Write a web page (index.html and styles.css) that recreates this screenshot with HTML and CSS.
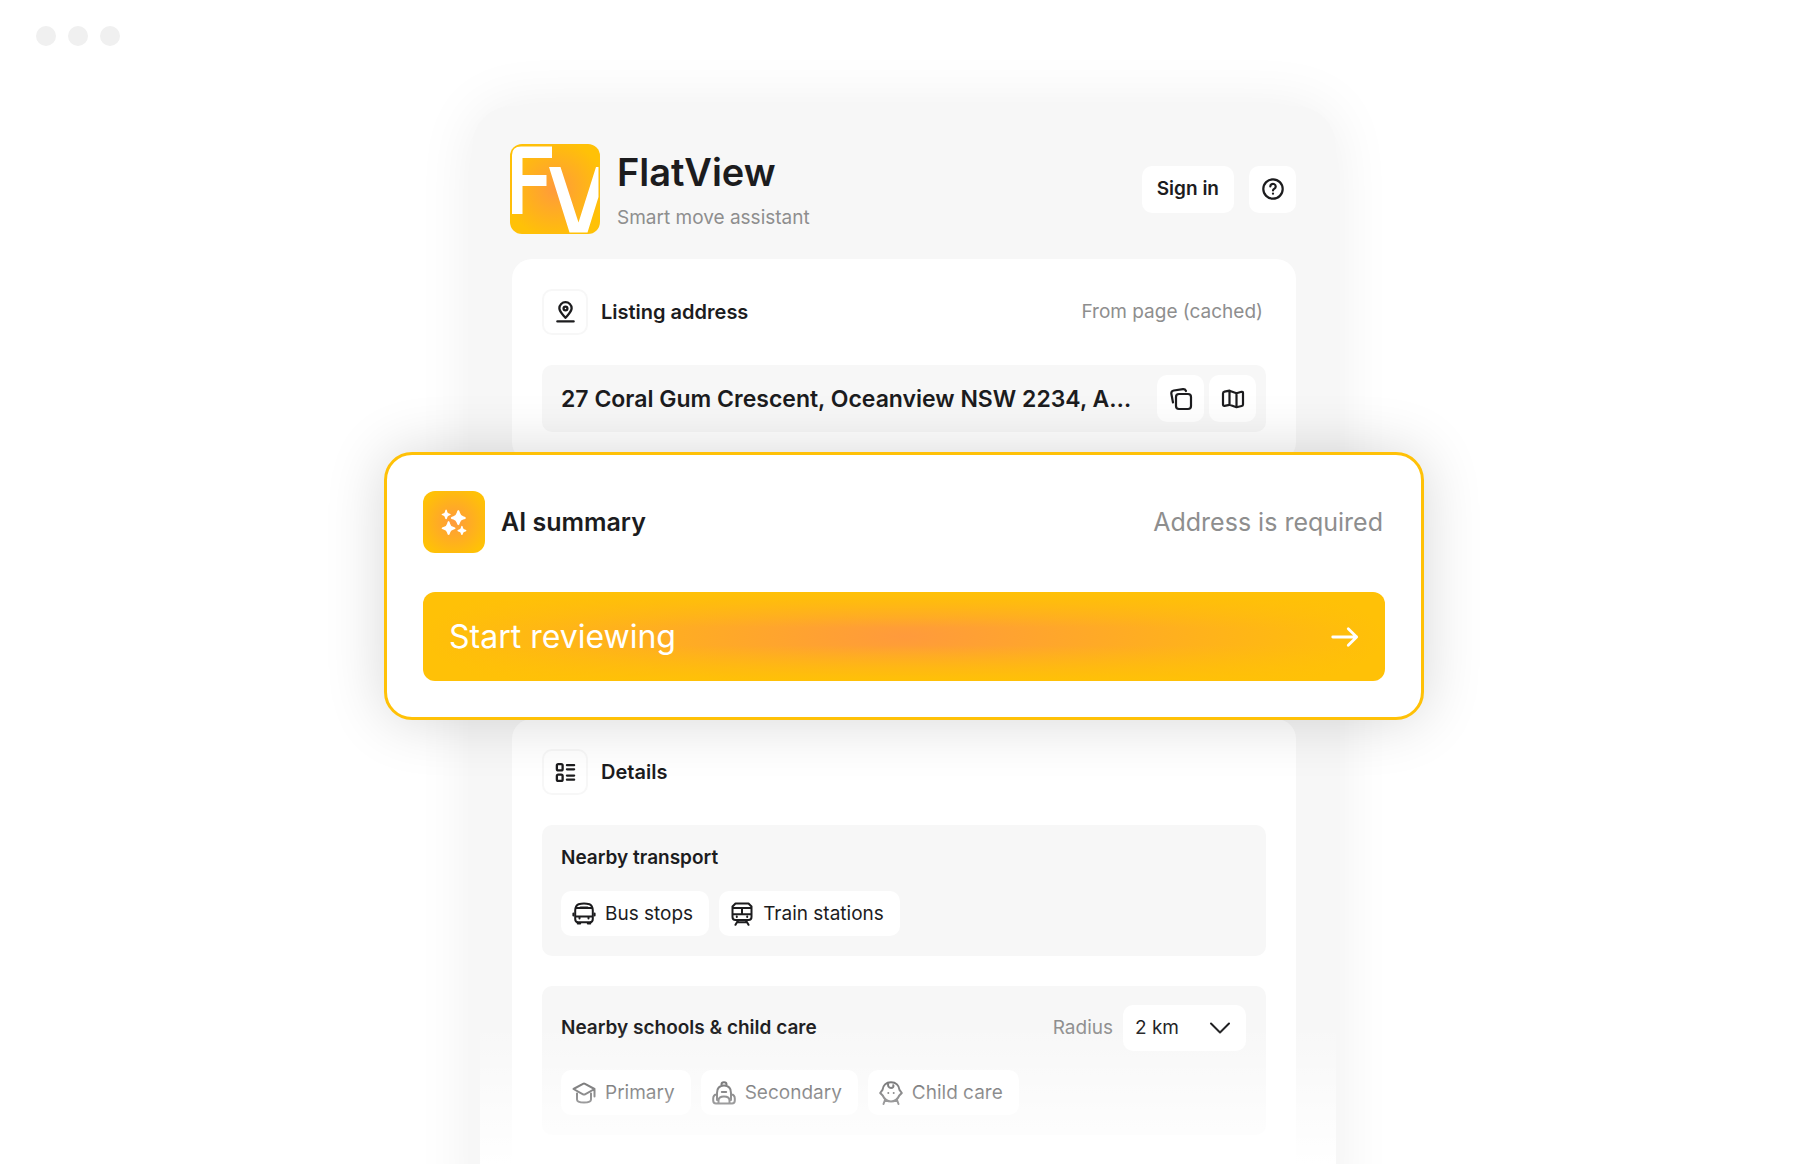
FILE: index.html
```html
<!DOCTYPE html>
<html lang="en">
<head>
<meta charset="utf-8">
<meta name="viewport" content="width=device-width, initial-scale=1">
<title>FlatView</title>
<link rel="stylesheet" href="styles.css">
</head>
<body>
<div class="stage">
  <div class="window-dots" aria-hidden="true"><span></span><span></span><span></span></div>

  <main class="panel">
    <header class="header">
      <div class="logo" aria-hidden="true">
        <svg viewBox="0 0 90 90" width="90" height="90">
          <path fill="#fff" d="M11 2.500H42V14H12.500V31H36.500V42H12.500V70H2V11Q2 2.500 11 2.500Z"/>
          <path fill="#fff" d="M39 23H50.500L68.500 78.500L86 23H88.500V53L77.500 88.500H59.500Z"/>
        </svg>
      </div>
      <div class="brand">
        <h1 class="brand-name">FlatView</h1>
        <p class="brand-tag">Smart move assistant</p>
      </div>
      <button class="btn" type="button">Sign in</button>
      <button class="btn btn-icon" type="button" aria-label="Help">
        <svg class="icon" viewBox="0 0 24 24"><circle cx="12" cy="12" r="9.700"/><path d="M9.300 9.500a2.700 2.600 0 1 1 4.200 2.100c-.9.600-1.500 1-1.500 1.800"/><path d="M12 16.600v.1"/></svg>
      </button>
    </header>

    <section class="card">
      <div class="card-head">
        <span class="tile"><svg class="icon" viewBox="0 0 24 24"><path d="M12 17.500c-2.800-3.300-6.400-6.400-6.400-9.900a6.400 6.400 0 0 1 12.800 0c0 3.500-3.600 6.600-6.400 9.900z"/><circle cx="12" cy="7.800" r="2"/><path d="M3.500 21.300h17"/></svg></span>
        <h2 class="card-title">Listing address</h2>
        <span class="note">From page (cached)</span>
      </div>
      <div class="address">
        <span class="address-text">27 Coral Gum Crescent, Oceanview NSW 2234, A…</span>
        <button class="btn btn-icon" type="button" aria-label="Copy address">
          <svg class="icon" viewBox="0 0 24 24"><rect x="7" y="7" width="15" height="15" rx="3"/><path d="M4 15.500L2.300 6.500A3 3 0 0 1 4.800 3.500L14 2.200A3 3 0 0 1 17 4"/></svg>
        </button>
        <button class="btn btn-icon" type="button" aria-label="Open map">
          <svg class="icon" viewBox="0 0 24 24"><path d="M2 6.500q0-1.500 1.500-1.800L8.500 3.700 15.500 6.200 20.500 4.800q1.500-.3 1.500 1.200V17.500q0 1.200-1.300 1.500L15.500 20.200 8.500 17.800 3.500 18.800q-1.500.2-1.500-1.200zM8.500 3.700V17.800M15.500 6.200V20.200"/></svg>
        </button>
      </div>
    </section>

    <section class="summary">
      <div class="summary-head">
        <span class="summary-tile"><svg viewBox="0 0 24 24" width="26" height="26" fill="#fff"><path d="M16 1Q17 1 17.500 3.500Q18.300 6.200 20.500 6.700Q23 7.300 23 8.200T20.500 9.700Q18.200 10.200 17.500 12.700Q17 15 16 15T14.500 12.700Q13.800 10.300 11.500 9.700Q9 9.200 9 8.200T11.500 6.700Q13.800 6.100 14.500 3.500Q15 1 16 1Z"/><path d="M7 11Q8 11 8.400 13.500Q9 15.800 11.200 16.300Q13.500 16.900 13.500 17.800T11.200 19.200Q9 19.700 8.400 22Q8 24 7 24T5.600 22Q5 19.800 2.800 19.200Q.5 18.700.5 17.800T2.800 16.300Q5 15.800 5.600 13.500Q6 11 7 11Z"/><path d="M4.700.5Q5.400.5 5.700 2.200Q6 3.800 7.500 4.200Q9 4.500 9 5.100T7.500 6Q6 6.300 5.700 8Q5.400 9.500 4.700 9.500T3.700 8Q3.400 6.400 2 6Q.5 5.700.5 5.100T2 4.200Q3.400 3.800 3.700 2.200Q4 .5 4.700.5Z"/><path d="M19.300 15.500Q20 15.500 20.300 17.200Q20.600 18.600 22 19Q23.500 19.400 23.500 20T22 20.900Q20.600 21.200 20.300 22.600Q20 24 19.300 24T18.300 22.600Q18 21.200 16.600 20.900Q15.100 20.600 15.100 20T16.600 19Q18 18.600 18.300 17.200Q18.600 15.500 19.300 15.500Z"/></svg></span>
        <h2 class="summary-title">AI summary</h2>
        <span class="summary-note">Address is required</span>
      </div>
      <button class="start" type="button">
        <span>Start reviewing</span>
        <svg class="icon icon-arrow" viewBox="0 0 24 24"><path d="M1.500 12H22M14.800 5L22 12L14.800 19"/></svg>
      </button>
    </section>

    <section class="card card-last">
      <div class="card-head">
        <span class="tile"><svg class="icon" viewBox="0 0 24 24"><rect x="3" y="3.300" width="6" height="6.500" rx="1.500"/><rect x="3" y="14.200" width="6" height="6.500" rx="1.500"/><path d="M13.500 4.400h7.500M13.500 8.700h7.500M13.500 15.200h7.500M13.500 19.500h7.500"/></svg></span>
        <h2 class="card-title">Details</h2>
      </div>
      <div class="group">
        <h3 class="group-title">Nearby transport</h3>
        <div class="chips">
          <button class="chip" type="button"><svg class="icon" viewBox="0 0 24 24"><path d="M3.200 12V8.500Q3.500 3.500 6.500 2.300Q12 .6 17.500 2.300Q20.500 3.500 20.800 8.500V17Q20.800 20 18 20.300H6Q3.200 20 3.200 17ZM4 6H20M3.500 14.500H20.500"/><path d="M8.500 5.500h7M7.500 15v1.500M16.500 15v1.500M5.700 21.500h2.500M15.800 21.500h2.500M1.400 11.500V13.500M22.600 11.500V13.500"/></svg>Bus stops</button>
          <button class="chip" type="button"><svg class="icon" viewBox="0 0 24 24"><path d="M5.500 1.500H18.500L21.500 4.500V15Q21.500 18 18.500 18H5.500Q2.500 18 2.500 15V4.500ZM2.500 6h19M2.500 12.300h19M12 6V12.300M6.800 14.500v.5M17.200 14.500v.5M8 18.500L5.500 22.800M16 18.500L18.500 22.800M7.500 20.300h9"/></svg>Train stations</button>
        </div>
      </div>
      <div class="group">
        <div class="group-head">
          <h3 class="group-title">Nearby schools &amp; child care</h3>
          <label class="radius-label" for="radius">Radius</label>
          <div class="select-wrap">
            <select class="select" id="radius"><option>2 km</option><option>5 km</option><option>10 km</option></select>
            <svg class="icon select-arrow" viewBox="0 0 24 24"><path d="M3 7.500L12 16.500L21 7.500"/></svg>
          </div>
        </div>
        <div class="chips">
          <button class="chip" type="button"><svg class="icon" viewBox="0 0 24 24"><path d="M1.500 8L11 2.800Q12 2.300 13 2.800L22.500 8L13 13.300Q12 13.800 11 13.300ZM5 12.500V18.500Q5 21.500 12 21.500T19 18.500V12.500M22.500 8.500V15.500"/></svg>Primary</button>
          <button class="chip" type="button"><svg class="icon" viewBox="0 0 24 24"><path d="M9.500 4.500V3.500Q9.500 1.200 12 1.200T14.500 3.500V4.500M5 19V12Q5 4.500 12 4.500T19 12V19M4 22.500H20Q22.800 22.500 22.800 19.500V17.500Q22.800 14 19 13M4 22.500Q1.200 22.500 1.200 19.500V17.500Q1.200 14 5 13M9.800 11H14.200M6.500 22V19.500Q6.500 15.500 12 15.500T17.500 19.500V22"/></svg>Secondary</button>
          <button class="chip" type="button"><svg class="icon" viewBox="0 0 24 24"><path d="M12 1.200C17 1.200 20 4.500 20.500 8.800L22.800 12L20.300 14.500C18.500 18.500 15.500 20.500 12 20.500S5.500 18.500 3.700 14.500L1.200 12L3.500 8.800C4 4.500 7 1.200 12 1.200ZM9.300 2C8.500 5.500 10 7 12 7C14 7 14.800 5.800 14.300 4.200M9.300 12v.1M14.700 12v.1M6 19L4.500 23M18 19L19.500 23"/></svg>Child care</button>
        </div>
      </div>
    </section>
  </main>
</div>
</body>
</html>
```
FILE: styles.css
```css
* { box-sizing: border-box; }

body {
  margin: 0;
  background: #fff;
  color: #1c1c1e;
  font: 500 19px/28px Inter, "Liberation Sans", sans-serif;
}

h1, h2, h3, p { margin: 0; }

button, select { font: inherit; color: inherit; border: 0; cursor: pointer; }

.stage {
  display: flex;
  flex-direction: column;
  min-height: 100vh;
  overflow: hidden;
}

.window-dots { display: flex; gap: 12px; padding: 26px 36px 60px; }
.window-dots span { width: 20px; height: 20px; border-radius: 50%; background: #f0f0f0; }

/* The panel runs on below the window's lower edge. */
.panel {
  position: relative;
  display: flex;
  flex: 1;
  flex-direction: column;
  width: 100%;
  max-width: 864px;
  margin: 0 auto -60px;
  padding: 38px 40px 0;
  border-radius: 40px 40px 0 0;
  background: #f7f7f7;
  box-shadow: 0 0 60px rgba(0, 0, 0, 0.07);
}

/* Fades the lower end of the panel into the page. */
.panel::after {
  content: "";
  position: absolute;
  inset: auto 0 0 8px;
  height: 200px;
  background: linear-gradient(rgba(255, 255, 255, 0), #fff 140px);
  pointer-events: none;
}

.icon {
  flex: none;
  width: 24px;
  height: 24px;
  fill: none;
  stroke: currentColor;
  stroke-width: 2;
  stroke-linecap: round;
  stroke-linejoin: round;
}

.header { display: flex; align-items: center; gap: 15px; margin: 0 0 25px -2px; }

.logo {
  width: 90px;
  height: 90px;
  overflow: hidden;
  border-radius: 12px;
  background: radial-gradient(closest-side, #ff9a3c, #ffc107 110%);
}
.logo svg { display: block; }

.brand { flex: 1; padding-left: 2px; }
.brand-name { font-size: 38px; line-height: 52px; font-weight: 600; }
.brand-tag { padding-top: 6px; color: #8e8e8e; font-weight: 400; }

.btn {
  display: flex;
  align-items: center;
  justify-content: center;
  height: 47px;
  padding: 0 15px;
  border-radius: 10px;
  background: #fff;
  font-weight: 600;
}
.btn-icon { flex: none; width: 47px; padding: 0; }
.btn .icon { stroke-width: 2.2; }

.card {
  display: flex;
  flex-direction: column;
  gap: 30px;
  padding: 30px;
  border-radius: 20px;
  background: #fff;
}
.card-last { flex: 1; border-radius: 20px 20px 0 0; }

.card-head { display: flex; align-items: center; gap: 13px; }
.tile {
  display: grid;
  place-items: center;
  width: 46px;
  height: 46px;
  border: 2px solid #f7f7f7;
  border-radius: 10px;
}
.tile .icon { width: 23px; height: 23px; stroke-width: 2.4; }
.card-title { font-size: 20px; font-weight: 600; }
.group-title { font-size: 19px; font-weight: 600; }
.note { margin-left: auto; padding-right: 3px; color: #8e8e8e; font-weight: 400; }

.address {
  display: flex;
  align-items: center;
  gap: 5px;
  padding: 10px 10px 10px 19px;
  border-radius: 10px;
  background: #f7f7f7;
}
.address-text {
  flex: 1;
  min-width: 0;
  overflow: hidden;
  font-size: 23px;
  font-weight: 600;
  text-overflow: ellipsis;
  white-space: nowrap;
}

.summary {
  position: relative;
  z-index: 1;
  margin: -10px -128px -1px;
  padding: 36px;
  border: 3px solid #ffc107;
  border-radius: 28px;
  background: #fff;
  box-shadow: 0 0 60px rgba(0, 0, 0, 0.16);
}
.summary-head { display: flex; align-items: center; gap: 16px; margin-bottom: 39px; }
.summary-tile {
  display: grid;
  place-items: center;
  width: 62px;
  height: 62px;
  border-radius: 12px;
  background: radial-gradient(closest-side, #ff9a3c, #ffc107 115%);
}
.summary-title { font-size: 25px; font-weight: 600; }
.summary-note { margin-left: auto; padding-right: 2px; color: #8e8e8e; font-size: 25px; font-weight: 400; }

.start {
  display: flex;
  align-items: center;
  justify-content: space-between;
  width: 100%;
  height: 89px;
  padding: 0 26px;
  border-radius: 12px;
  background:
    linear-gradient(#ffc107, rgba(255, 193, 7, 0) 40%, rgba(255, 193, 7, 0) 60%, #ffc107),
    radial-gradient(50% 100%, #ff9a3c, #ffc107);
  color: #fff;
  font-size: 32px;
  font-weight: 400;
}
.icon-arrow { width: 28px; height: 28px; stroke-width: 2.4; }

.group {
  display: flex;
  flex-direction: column;
  gap: 19px;
  padding: 19px 20px 20px 19px;
  border-radius: 10px;
  background: #f7f7f7;
}
.group-head { display: flex; align-items: center; gap: 10px; }
.group-head .group-title { flex: 1; }
.radius-label { color: #8e8e8e; font-weight: 400; }
.select-wrap { position: relative; }
.select {
  width: 123px;
  height: 46px;
  padding: 0 12px;
  appearance: none;
  border-radius: 10px;
  background: #fff;
  font-weight: 400;
}
.select-arrow { position: absolute; top: 11px; right: 14px; pointer-events: none; }

.chips { display: flex; gap: 10px; }
.chip {
  display: flex;
  align-items: center;
  gap: 9px;
  height: 45px;
  padding: 0 16px 0 11px;
  border-radius: 10px;
  background: #fff;
  font-weight: 400;
}
```
